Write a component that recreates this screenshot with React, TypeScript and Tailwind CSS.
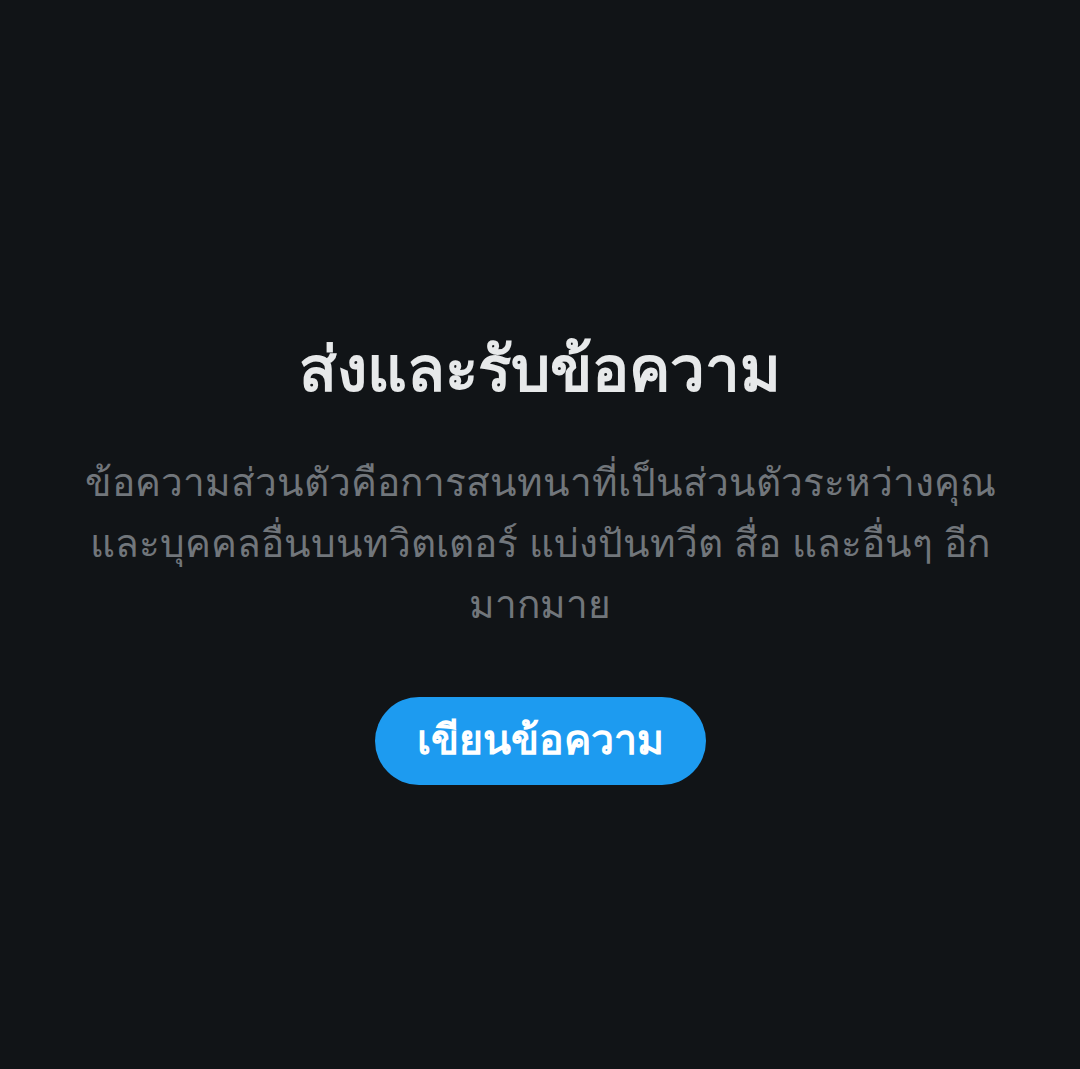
import React from 'react';

const App: React.FC = () => {
  return (
    <div
      className="w-full h-[1069px] bg-[#111417] flex flex-col items-center px-[76px] pt-[334px]"
      style={{ fontFamily: '"Liberation Sans", sans-serif' }}
    >
      <h1 className="text-[62px] leading-[72px] font-bold text-[#e7e9ea] text-center">
        ส่งและรับข้อความ
      </h1>
      <p className="mt-[46px] text-[38.8px] leading-[61px] text-[#71767b] text-center">
        ข้อความส่วนตัวคือการสนทนาที่เป็นส่วนตัวระหว่างคุณและบุคคลอื่นบนทวิตเตอร์ แบ่งปันทวีต สื่อ และอื่นๆ อีกมากมาย
      </p>
      <button className="mt-[62px] h-[88px] px-[42px] rounded-full bg-[#1d9bf0] text-white text-[41px] font-bold">
        เขียนข้อความ
      </button>
    </div>
  );
};

export default App;
